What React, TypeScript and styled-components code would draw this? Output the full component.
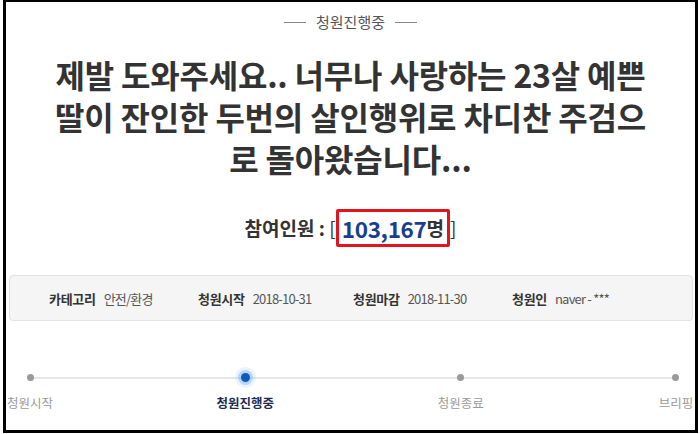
import React from "react";
import styled, { createGlobalStyle } from "styled-components";

const Global = createGlobalStyle`
  html, body { margin: 0; padding: 0; background: #fff; }
  body { font-family: "Noto Sans CJK KR", "Noto Sans", sans-serif; }
  * { box-sizing: border-box; }
`;

const Frame = styled.div`
  width: 695px;
  height: 433px;
  margin-left: 3px;
  border: 3px solid #000;
  border-top-width: 2px;
  display: flex;
  flex-direction: column;
  align-items: center;
  overflow: hidden;
`;

const Status = styled.div`
  margin-top: 10px;
  display: flex;
  align-items: center;
  gap: 10px;
  font-size: 15px;
  line-height: 20px;
  color: #555;
  &::before,
  &::after {
    content: "";
    width: 22px;
    height: 1px;
    background: #888;
  }
`;

const Title = styled.h1`
  margin: 21px 0 0;
  width: 600px;
  text-align: center;
  font-size: 32px;
  line-height: 42px;
  font-weight: 700;
  color: #333;
  letter-spacing: -0.2px;
  word-break: break-all;
`;

const Count = styled.div`
  margin-top: 30px;
  display: flex;
  align-items: center;
  font-size: 19px;
  font-weight: 700;
  color: #333;
  line-height: 28px;
`;

const Bracket = styled.span`
  font-weight: 400;
  color: #333;
`;

const Highlight = styled.span`
  display: inline-flex;
  align-items: center;
  border: 3px solid #e3141b;
  border-radius: 2px;
  padding: 2px 3px;
`;

const Number = styled.span`
  color: #183f8f;
  font-size: 22.5px;
  letter-spacing: -0.3px;
`;

const InfoBox = styled.div`
  margin-top: 28px;
  align-self: stretch;
  margin-left: 3px;
  margin-right: 2px;
  height: 46px;
  background: #f5f5f5;
  border: 1px solid #e2e2e2;
  border-radius: 4px;
  display: grid;
  grid-template-columns: 149px 155px 159px auto;
  align-items: center;
  padding-left: 39px;
  font-size: 13px;
`;

const InfoItem = styled.div`
  display: flex;
  align-items: center;
  gap: 8px;
`;

const InfoLabel = styled.span`
  font-weight: 700;
  color: #333;
  letter-spacing: -0.3px;
`;

const InfoValue = styled.span`
  color: #555;
  font-size: 13px;
  letter-spacing: -0.8px;
`;

const Timeline = styled.div`
  margin-top: 53px;
  align-self: stretch;
  margin-left: 6px;
  margin-right: 1px;
  display: flex;
  justify-content: space-between;
  position: relative;
  &::before {
    content: "";
    position: absolute;
    left: 18px;
    right: 18px;
    top: 3px;
    height: 2px;
    background: #e8e8e8;
  }
`;

const Step = styled.div`
  width: 36px;
  display: flex;
  flex-direction: column;
  align-items: center;
  gap: 13px;
  position: relative;
`;

const Dot = styled.span<{ $active?: boolean }>`
  width: ${(p) => (p.$active ? 9 : 7)}px;
  height: ${(p) => (p.$active ? 9 : 7)}px;
  margin-top: ${(p) => (p.$active ? -1 : 0)}px;
  margin-bottom: ${(p) => (p.$active ? -1 : 0)}px;
  border-radius: 50%;
  background: ${(p) => (p.$active ? "#0f5cb8" : "#9a9a9a")};
  box-shadow: ${(p) =>
    p.$active
      ? "0 0 0 3px rgba(90,160,235,0.35), 0 0 0 6px rgba(120,180,240,0.15)"
      : "none"};
`;

const StepLabel = styled.span<{ $active?: boolean }>`
  font-size: 12.5px;
  line-height: 18px;
  font-weight: ${(p) => (p.$active ? 700 : 400)};
  color: ${(p) => (p.$active ? "#1c2c52" : "#9a9a9a")};
  white-space: nowrap;
`;

const steps = [
  { label: "청원시작" },
  { label: "청원진행중", active: true },
  { label: "청원종료" },
  { label: "브리핑" },
];

export default function App() {
  return (
    <>
      <Global />
      <Frame>
        <Status>청원진행중</Status>
        <Title>
          제발 도와주세요.. 너무나 사랑하는 23살 예쁜 딸이 잔인한 두번의 살인행위로 차디찬 주검으로 돌아왔습니다...
        </Title>
        <Count>
          참여인원 :&nbsp;<Bracket>[</Bracket>
          <Highlight>
            <Number>103,167</Number>명
          </Highlight>
          <Bracket>]</Bracket>
        </Count>
        <InfoBox>
          <InfoItem>
            <InfoLabel>카테고리</InfoLabel>
            <InfoValue>안전/환경</InfoValue>
          </InfoItem>
          <InfoItem>
            <InfoLabel>청원시작</InfoLabel>
            <InfoValue>2018-10-31</InfoValue>
          </InfoItem>
          <InfoItem>
            <InfoLabel>청원마감</InfoLabel>
            <InfoValue>2018-11-30</InfoValue>
          </InfoItem>
          <InfoItem>
            <InfoLabel>청원인</InfoLabel>
            <InfoValue>naver - ***</InfoValue>
          </InfoItem>
        </InfoBox>
        <Timeline>
          {steps.map((s) => (
            <Step key={s.label}>
              <Dot $active={s.active} />
              <StepLabel $active={s.active}>{s.label}</StepLabel>
            </Step>
          ))}
        </Timeline>
      </Frame>
    </>
  );
}
